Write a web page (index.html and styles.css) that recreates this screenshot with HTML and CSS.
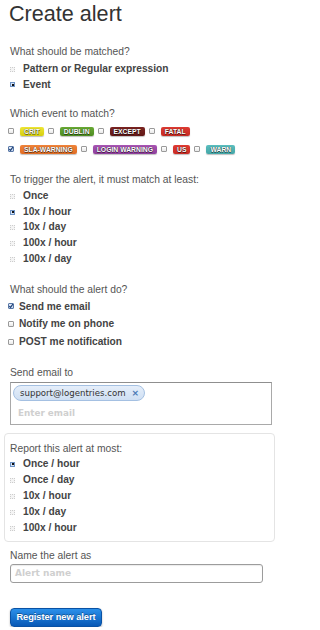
FILE: index.html
```html
<!DOCTYPE html>
<html>
<head>
<meta charset="utf-8">
<title>Create alert</title>
<link rel="stylesheet" href="styles.css">
</head>
<body>
<div class="page">
  <h1 class="title">Create alert</h1>

  <div class="sec sec-match">
    <div class="lbl">What should be matched?</div>
    <div class="opts opts-tight">
      <div class="opt"><span class="radio"></span>Pattern or Regular expression</div>
      <div class="opt"><span class="radio on"></span>Event</div>
    </div>
  </div>

  <div class="sec sec-event">
    <div class="lbl">Which event to match?</div>
    <div class="tagrow">
      <span class="cb"></span><span class="tag t-crit">CRIT</span>
      <span class="cb"></span><span class="tag t-dublin">DUBLIN</span>
      <span class="cb"></span><span class="tag t-except">EXCEPT</span>
      <span class="cb"></span><span class="tag t-fatal">FATAL</span>
    </div>
    <div class="tagrow">
      <span class="cb on"><svg viewBox="0 0 6 6" width="6" height="6"><path d="M1.2 3 L2.5 4.4 L4.9 1.2" fill="none" stroke="#1d3f73" stroke-width="1.1"/></svg></span><span class="tag t-sla">SLA-WARNING</span>
      <span class="cb"></span><span class="tag t-login">LOGIN WARNING</span>
      <span class="cb"></span><span class="tag t-us">US</span>
      <span class="cb"></span><span class="tag t-warn">WARN</span>
    </div>
  </div>

  <div class="sec sec-trigger">
    <div class="lbl">To trigger the alert, it must match at least:</div>
    <div class="opts opts-mid">
      <div class="opt"><span class="radio"></span>Once</div>
      <div class="opt"><span class="radio on"></span>10x / hour</div>
      <div class="opt"><span class="radio"></span>10x / day</div>
      <div class="opt"><span class="radio"></span>100x / hour</div>
      <div class="opt"><span class="radio"></span>100x / day</div>
    </div>
  </div>

  <div class="sec sec-action">
    <div class="lbl">What should the alert do?</div>
    <div class="opts opts-wide">
      <div class="opt"><span class="cb on"><svg viewBox="0 0 6 6" width="6" height="6"><path d="M1.2 3 L2.5 4.4 L4.9 1.2" fill="none" stroke="#1d3f73" stroke-width="1.1"/></svg></span>Send me email</div>
      <div class="opt"><span class="cb"></span>Notify me on phone</div>
      <div class="opt"><span class="cb"></span>POST me notification</div>
    </div>
  </div>

  <div class="sec sec-email">
    <div class="lbl">Send email to</div>
    <div class="emailbox">
      <div class="chips"><span class="chip">support@logentries.com<span class="chip-x">×</span></span></div>
      <div class="ph ph-email">Enter email</div>
    </div>
  </div>

  <div class="well">
    <div class="lbl lbl-well">Report this alert at most:</div>
    <div class="opts">
      <div class="opt"><span class="radio on"></span>Once / hour</div>
      <div class="opt"><span class="radio"></span>Once / day</div>
      <div class="opt"><span class="radio"></span>10x / hour</div>
      <div class="opt"><span class="radio"></span>10x / day</div>
      <div class="opt"><span class="radio"></span>100x / hour</div>
    </div>
  </div>

  <div class="sec sec-name">
    <div class="lbl">Name the alert as</div>
    <div class="textbox"><span class="ph">Alert name</span></div>
  </div>

  <div class="actions">
    <span class="btn">Register new alert</span>
  </div>
</div>
</body>
</html>
```

FILE: styles.css
```css
html, body {
  margin: 0;
  padding: 0;
  background: #fff;
  overflow: hidden;
}

.page {
  width: 275px;
  box-sizing: border-box;
  padding: 0 0 0 10px;
  font-family: "Liberation Sans", Arial, sans-serif;
  color: #444;
}

.title {
  margin: 0;
  padding-top: 1px;
  font-size: 21.6px;
  line-height: 26px;
  font-weight: normal;
  color: #333;
  margin-left: -1px;
}

.lbl {
  font-size: 10.3px;
  line-height: 16px;
  color: #555;
}

.sec-match { margin-top: 17px; }
.sec-event { margin-top: 14px; }
.sec-trigger { margin-top: 14px; }
.sec-action { margin-top: 15px; }
.sec-email { margin-top: 14.5px; }
.sec-name { margin-top: 5.7px; }

.opts { display: flex; flex-direction: column; }
.opts-tight { margin-top: 1px; }

.opt {
  display: flex;
  align-items: center;
  font-size: 10.2px;
  font-weight: bold;
  line-height: 16px;
  color: #444;
  white-space: nowrap;
}
.opts-tight .opt { line-height: 15.5px; }
.opts-mid .opt { line-height: 15.7px; }
.opts-wide .opt { line-height: 17.7px; }

.radio {
  display: inline-block;
  box-sizing: border-box;
  width: 5px;
  height: 5px;
  margin: 1px 8px 0 0;
  border: 1px dotted #cdcdcd;
  background: #f4f4f4;
  position: relative;
  flex: none;
}
.radio.on {
  border: 1px solid #6d93c6;
  background: #d4e3f6;
}
.radio.on::after {
  content: "";
  position: absolute;
  left: 0.5px;
  top: 0.5px;
  width: 2px;
  height: 2px;
  background: #111;
}

.cb {
  display: inline-flex;
  align-items: center;
  justify-content: center;
  box-sizing: border-box;
  width: 6px;
  height: 6px;
  margin: 0 5px 0 -2px;
  border: 1px solid #9a9a9a;
  background: linear-gradient(#fff, #e9e9e9);
  border-radius: 1px;
  flex: none;
  overflow: visible;
}
.cb svg { display: block; flex: none; margin: -1px; }
.cb.on {
  border-color: #5877a6;
  background: linear-gradient(#e6eefa, #c3d4ee);
}

.tagrow {
  display: flex;
  align-items: center;
  height: 18px;
}
.tagrow .cb { margin-right: 6px; margin-left: 0; }
.tagrow .cb:first-child { margin-left: -2px; }

.tag {
  display: inline-block;
  height: 9px;
  line-height: 9px;
  padding: 0 4px;
  margin-right: 4px;
  font-size: 6.8px;
  font-weight: bold;
  color: #fff;
  border-radius: 2px;
  text-shadow: 0 0 1px rgba(0,0,0,0.8), 0 1px 0 rgba(0,0,0,0.5);
  box-shadow: 0 1px 1px rgba(0,0,0,0.25);
  white-space: nowrap;
}
.t-crit { background: linear-gradient(#eee634, #d6cf10); }
.t-dublin { background: linear-gradient(#68a934, #4e8c22); }
.t-except { background: linear-gradient(#7a2422, #611815); }
.t-fatal { background: linear-gradient(#dc3b32, #c62a22); }
.t-sla { background: linear-gradient(#f0843a, #e06c24); }
.t-login { background: linear-gradient(#a855b3, #8e3e9b); }
.t-us { background: linear-gradient(#df3b33, #c92b24); }
.t-warn { background: linear-gradient(#5bbebe, #43a6a7); }

.emailbox {
  box-sizing: border-box;
  width: 262px;
  height: 43px;
  margin-top: 1px;
  border: 1px solid #a9a9a9;
  border-top-color: #8f8f8f;
  padding: 2px 2px 0 2px;
}
.chips { display: flex; }
.chip {
  display: inline-flex;
  align-items: center;
  box-sizing: border-box;
  height: 16px;
  padding: 0 5px 0 6px;
  border: 1px solid #a4c0e2;
  border-radius: 8px;
  background: linear-gradient(#e5eefa, #cfdff3);
  font-family: "DejaVu Sans", "Liberation Sans", sans-serif;
  font-size: 8.6px;
  color: #333;
  white-space: nowrap;
}
.chip-x {
  margin-left: 6px;
  font-size: 9px;
  font-weight: bold;
  color: #4a78b5;
}

.ph {
  font-family: "DejaVu Sans", "Liberation Sans", sans-serif;
  font-weight: bold;
  color: #cfcfcf;
}
.ph-email {
  margin-top: 5px;
  padding-left: 5px;
  font-size: 8.8px;
  line-height: 14px;
}

.well {
  box-sizing: border-box;
  width: 271px;
  margin: 8px 0 0 -6px;
  padding: 7.4px 0 5.6px 5px;
  border: 1px solid #e4e4e4;
  border-radius: 4px;
}
.lbl-well { line-height: 14px; }

.textbox {
  box-sizing: border-box;
  width: 253px;
  height: 19px;
  border: 1px solid #9c9c9c;
  border-radius: 3px;
  padding-left: 4px;
  display: flex;
  align-items: center;
  box-shadow: inset 0 1px 1px rgba(0,0,0,0.08);
}
.textbox .ph { font-size: 9px; }

.actions { margin-top: 23px; }
.btn {
  display: inline-block;
  box-sizing: border-box;
  width: 92px;
  height: 19px;
  line-height: 17px;
  text-align: center;
  font-size: 9.2px;
  font-weight: bold;
  color: #fff;
  border: 1px solid #0a52a4;
  border-radius: 4px;
  background: linear-gradient(#2b90ea, #0859b6);
  text-shadow: 0 -1px 0 rgba(0,0,0,0.35);
  box-shadow: 0 1px 2px rgba(0,0,0,0.3);
  white-space: nowrap;
}
```
